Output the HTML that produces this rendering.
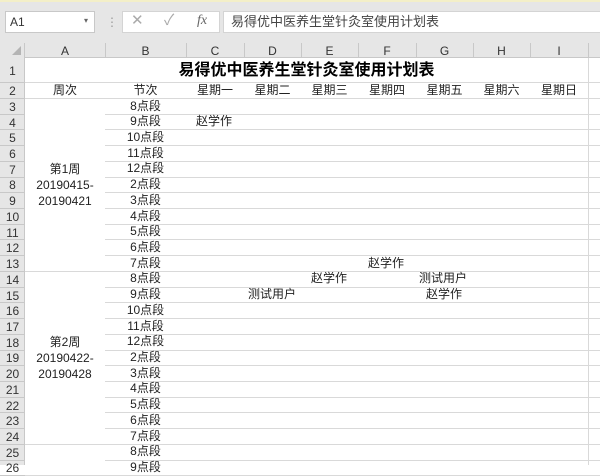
<!DOCTYPE html>
<html><head><meta charset="utf-8"><style>
body{margin:0;width:600px;height:465px;overflow:hidden;background:#fff;font-family:"Liberation Sans","Noto Sans CJK SC",sans-serif;position:relative}
div{position:absolute;box-sizing:border-box}
.t{font-size:12px;color:#222;white-space:nowrap;line-height:16px}
</style></head><body>
<div style="left:0;top:0;width:600px;height:43px;background:#e6e6e6"></div>
<div style="left:0;top:0;width:600px;height:2px;background:#f3efc8"></div>
<div style="left:5px;top:11px;width:90px;height:22px;background:#fff;border:1px solid #c8c8c8"></div>
<div class="t" style="left:10px;top:14px;color:#333">A1</div>
<div class="t" style="left:84px;top:13px;font-size:8px;color:#666">▾</div>
<div class="t" style="left:106px;top:14px;color:#999">⋮</div>
<div style="left:122px;top:11px;width:98px;height:22px;background:#fff;border:1px solid #d4d4d4"></div>
<div class="t" style="left:131px;top:13px;font-size:15px;color:#aaa">✕</div>
<div class="t" style="left:164px;top:13px;font-size:15px;color:#aaa">✓</div>
<div class="t" style="left:197px;top:13px;font-family:'Liberation Serif',serif;font-style:italic;color:#666;font-size:14px">fx</div>
<div style="left:223px;top:11px;width:377px;height:22px;background:#fff;border:1px solid #d4d4d4;border-right:none"></div>
<div class="t" style="left:231px;top:14px;font-size:13px;color:#444">易得优中医养生堂针灸室使用计划表</div>
<div id="g"></div>
<script>
var X=[25,105,186,244,301,358,416,473,530,588];
var L="ABCDEFGHI";
function rt(n){if(n==1)return 58;if(n==2)return 82;return 98+(n-3)*15.72;}
var h='';
h+='<div style="left:0;top:43px;width:600px;height:15px;background:#e6e6e6;border-bottom:1px solid #c8c8c8"></div>';
h+='<div style="left:0;top:43px;width:25px;height:422px;background:#e6e6e6;border-right:1px solid #c8c8c8"></div>';
h+='<div style="left:12px;top:46px;width:0;height:0;border-left:9px solid transparent;border-bottom:9px solid #b4b4b4"></div>';
for(var i=0;i<9;i++){h+='<div class="t" style="left:'+X[i]+'px;top:43px;width:'+(X[i+1]-X[i])+'px;text-align:center;color:#333">'+L[i]+'</div>';h+='<div style="left:'+X[i+1]+'px;top:43px;width:1px;height:15px;background:#c8c8c8"></div>';}
for(var i=1;i<10;i++){
 var top=(i<9)?82:58;
 h+='<div style="left:'+X[i]+'px;top:'+top+'px;width:1px;height:'+(465-top)+'px;background:#d9d9d9"></div>';
}
h+='<div style="left:588px;top:58px;width:1px;height:407px;background:#d9d9d9"></div>';
for(var n=1;n<=26;n++){
 var t=rt(n),b=rt(n+1);
 h+='<div class="t" style="left:0;top:'+(t+(b-t-16)/2+1)+'px;width:25px;text-align:center;color:#333">'+n+'</div>';
 h+='<div style="left:0;top:'+b+'px;width:25px;height:1px;background:#c8c8c8"></div>';
 var gl=(n>=3&&n<=12)||(n>=14&&n<=23)||n==25?105:25;
 h+='<div style="left:'+gl+'px;top:'+b+'px;width:'+(600-gl)+'px;height:1px;background:#d9d9d9"></div>';
}
h+='<div style="left:25px;top:58px;width:563px;height:24px;background:#fff"></div>';
h+='<div style="left:25px;top:61px;width:563px;text-align:center;font-weight:bold;font-size:16px;line-height:20px;color:#000;white-space:nowrap">易得优中医养生堂针灸室使用计划表</div>';
var hd=["周次","节次","星期一","星期二","星期三","星期四","星期五","星期六","星期日"];
for(var i=0;i<9;i++)h+='<div class="t" style="left:'+X[i]+'px;top:82px;width:'+(X[i+1]-X[i])+'px;text-align:center">'+hd[i]+'</div>';
var s=["8","9","10","11","12","2","3","4","5","6","7"];
for(var n=3;n<=26;n++){var k=(n-3)%11;h+='<div class="t" style="left:105px;top:'+(rt(n)-0.5)+'px;width:81px;text-align:center">'+s[k]+'点段</div>';}
function wk(a,d1,d2,top){h+='<div class="t" style="left:25px;top:'+top+'px;width:80px;text-align:center;line-height:16px">'+a+'<br>'+d1+'<br>'+d2+'</div>';}
wk("第1周","20190415-","20190421",rt(3)+63);
wk("第2周","20190422-","20190428",rt(14)+63);
function c(x,n,s){h+='<div class="t" style="left:'+x+'px;top:'+(rt(n)-0.5)+'px">'+s+'</div>';}
c(196,4,"赵学作");c(368,13,"赵学作");c(311,14,"赵学作");c(419,14,"测试用户");c(248,15,"测试用户");c(426,15,"赵学作");
document.getElementById('g').outerHTML=h;
</script>
</body></html>
